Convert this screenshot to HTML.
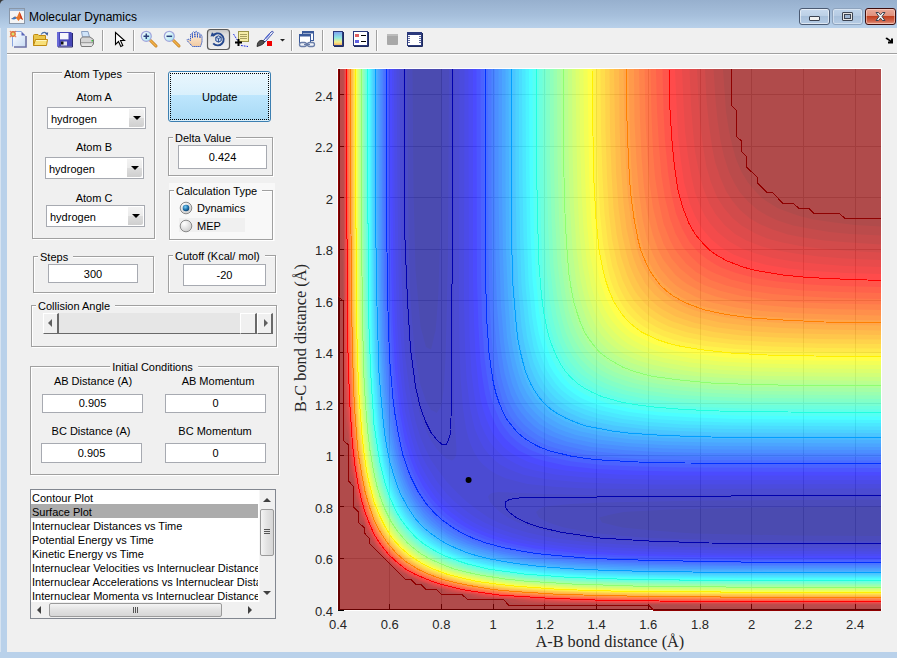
<!DOCTYPE html>
<html><head><meta charset="utf-8">
<style>
html,body{margin:0;padding:0;width:897px;height:658px;overflow:hidden;background:#f0f0f0;}
body{position:relative;font-family:"Liberation Sans",sans-serif;}
.a{position:absolute;}
.t{position:absolute;font:11px/13px "Liberation Sans",sans-serif;color:#000;white-space:nowrap;}
.pn{position:absolute;box-sizing:border-box;border:1px solid #a0a0a0;box-shadow:inset 1px 1px #fff,1px 1px #fff;}
.pt{position:absolute;font:11px/13px "Liberation Sans",sans-serif;color:#000;white-space:nowrap;background:#f0f0f0;padding:0 5px 0 2px;}
.ed{position:absolute;box-sizing:border-box;border:1px solid #a7aab1;background:#fff;font:11px/13px "Liberation Sans",sans-serif;text-align:center;color:#000;}
.pop{position:absolute;box-sizing:border-box;border:1px solid #a7aab1;background:#fff;}
.pop .tx{position:absolute;left:3px;font:11px/13px "Liberation Sans",sans-serif;color:#000;}
.pop .bt{position:absolute;right:1px;top:1px;bottom:1px;width:15px;border-radius:0 2px 2px 0;background:linear-gradient(#f3f3f3 0,#ebebeb 50%,#dddddd 50%,#cfcfcf 100%);}
.pop .bt:after{content:"";position:absolute;left:4px;top:7px;border-left:4px solid transparent;border-right:4px solid transparent;border-top:4px solid #000;}
.tick{position:absolute;font:13px/15px "Liberation Sans",sans-serif;color:#262626;white-space:nowrap;}
.sep{position:absolute;top:30px;width:1px;height:21px;background:#a0a0a0;box-shadow:1px 0 #fff;}
</style></head><body>

<!-- window frame -->
<div class="a" style="left:0;top:0;width:897px;height:28px;background:linear-gradient(#97b0ce,#a6bfdb 55%,#b9d1ea)"></div>
<div class="a" style="left:0;top:28px;width:7px;height:630px;background:#b9d1ea"></div>
<div class="a" style="left:0;top:28px;width:1px;height:630px;background:#d6e3f1"></div>
<div class="a" style="left:0;top:652px;width:897px;height:6px;background:#b9d1ea"></div>
<div class="a" style="left:7px;top:53px;width:890px;height:1px;background:#a0a0a0"></div>
<div class="a" style="left:7px;top:54px;width:890px;height:1px;background:#fff"></div>
<svg class="a" style="left:0;top:0" width="4" height="4" viewBox="0 0 4 4"><path d="M0 0H4Q1 0.5 0 4Z" fill="#3a3a3a"/></svg>
<!-- title icon -->
<svg class="a" style="left:9px;top:8px" width="17" height="17" viewBox="0 0 17 17">
<rect x="0.5" y="0.5" width="15" height="15" fill="#f4f4f4" stroke="#8a97a8"/>
<rect x="1" y="1" width="14" height="2" fill="#9ab5d6"/>
<path d="M2 11 L6 8.5 L8 9 L10.5 3.5 L14 12 L11.5 10.5 L9.5 13 L7.5 10.5 Z" fill="#e8762b"/>
<path d="M2 11 L6 8.5 L7.5 10.5 L5 11.5 Z" fill="#3b7bc4"/>
<path d="M10.5 3.5 L14 12 L11.5 10.5 Z" fill="#c8331a"/>
</svg>
<div class="a" style="left:29px;top:10px;font:12px/14px 'Liberation Sans',sans-serif;color:#000;white-space:nowrap">Molecular Dynamics</div>
<!-- caption buttons -->
<div class="a" style="left:799px;top:8px;width:31px;height:17px;box-sizing:border-box;border:1px solid #4b5a72;border-radius:3px;background:linear-gradient(#c9daee 0,#bcd0e6 45%,#a8c0db 50%,#b4cbe4 100%);box-shadow:inset 0 0 0 1px rgba(255,255,255,.55)"></div>
<div class="a" style="left:809px;top:16px;width:11px;height:5px;box-sizing:border-box;border:1px solid #3a4150;border-radius:1px;background:#f0f0f0"></div>
<div class="a" style="left:832px;top:8px;width:31px;height:17px;box-sizing:border-box;border:1px solid #8ea3bd;border-radius:3px;background:linear-gradient(#c0d4ea 0,#b6cbe3 45%,#a9c1dc 50%,#b6cce4 100%);box-shadow:inset 0 0 0 1px rgba(255,255,255,.4)"></div>
<div class="a" style="left:842px;top:12px;width:11px;height:9px;box-sizing:border-box;border:1px solid #3d4452;border-radius:1px;background:#e4e4e4"></div>
<div class="a" style="left:844px;top:14px;width:7px;height:5px;box-sizing:border-box;border:1px solid #3d4452;background:#9fb6d2"></div>
<div class="a" style="left:865px;top:8px;width:31px;height:17px;box-sizing:border-box;border:1px solid #3d0d0d;border-radius:3px;background:linear-gradient(#eaa999 0,#e0907c 45%,#c3401f 50%,#d0634a 80%,#e49a85 100%);box-shadow:inset 0 0 0 1px rgba(255,230,220,.5)"></div>
<svg class="a" style="left:874px;top:11px" width="13" height="11" viewBox="0 0 13 11">
<path d="M2 1.5 L4.5 1.5 L6.5 3.8 L8.5 1.5 L11 1.5 L8 5.5 L11 9.5 L8.5 9.5 L6.5 7.2 L4.5 9.5 L2 9.5 L5 5.5 Z" fill="#f4f4f4" stroke="#3b4250" stroke-width="1" stroke-linejoin="round"/>
</svg>

<!-- toolbar -->
<svg class="a" style="left:0;top:28px" width="440" height="25" viewBox="0 28 440 25">
<defs>
<linearGradient id="gPage" x1="0" y1="0" x2="1" y2="1"><stop offset="0" stop-color="#ffffff"/><stop offset="1" stop-color="#c9dcf4"/></linearGradient>
<linearGradient id="gFold" x1="0" y1="0" x2="0" y2="1"><stop offset="0" stop-color="#ffe27a"/><stop offset="1" stop-color="#e2b437"/></linearGradient>
<linearGradient id="gLens" x1="0" y1="0" x2="1" y2="1"><stop offset="0" stop-color="#ffffff"/><stop offset="1" stop-color="#9fe3f0"/></linearGradient>
<linearGradient id="gCbar" x1="0" y1="0" x2="0" y2="1"><stop offset="0" stop-color="#7d9ef0"/><stop offset=".45" stop-color="#8fe8e0"/><stop offset=".75" stop-color="#f2ee8a"/><stop offset="1" stop-color="#f4a860"/></linearGradient>
<linearGradient id="gBtn" x1="0" y1="0" x2="0" y2="1"><stop offset="0" stop-color="#c4c4c4"/><stop offset=".25" stop-color="#dedede"/><stop offset="1" stop-color="#f0f0f0"/></linearGradient>
<linearGradient id="gHand" x1="0" y1="0" x2="0" y2="1"><stop offset="0" stop-color="#fff4e6"/><stop offset="1" stop-color="#f0c9a0"/></linearGradient>
</defs>
<!-- new -->
<path d="M13 32 H21.5 L25 35.5 V46 H13 Z" fill="url(#gPage)"/>
<path d="M12.5 46.5 V31.5 H21.5" fill="none" stroke="#8aa6e0" stroke-width="1"/>
<path d="M14 47 H26 V36" fill="none" stroke="#6a70a6" stroke-width="1.6"/>
<path d="M21.5 31.5 L25.5 35.5 H21.5 Z" fill="#5a66b8"/>
<circle cx="13" cy="34" r="2.2" fill="#d8e070" stroke="#e6713c" stroke-width="1.4"/>
<path d="M10.3 31.3h.01M15.7 31.3h.01M10.3 36.7h.01M15.7 36.7h.01" stroke="#e6713c" stroke-width="1.3" stroke-linecap="round"/>
<!-- open -->
<path d="M33.5 45.5 V35.5 Q33.5 34.5 34.5 34.5 H38 L39 35.5 H45.5 V45.5 Z" fill="#e9c54a" stroke="#c08a10" stroke-width="1"/>
<path d="M35.5 39.5 H47.5 L46.5 45.5 H33.5 Z" fill="#f8e07a" stroke="#c08a10" stroke-width="1"/>
<path d="M36 40.5 H46.5" stroke="#fff6c0" stroke-width="1"/>
<path d="M41 34.5 Q43.5 31.2 46.5 33.2" fill="none" stroke="#4a70a8" stroke-width="1.1"/>
<path d="M45 33.5 L48.2 32.3 L47.6 35.8 Z" fill="#3a5a98"/>
<!-- save -->
<path d="M57 32 H71 L72 33 V46.5 H57 Z" fill="#4848b8"/>
<path d="M57 32 H59 V46.5 H57 Z" fill="#6a6ad8"/>
<rect x="60" y="33" width="8.5" height="6" fill="#f6f6fc"/>
<rect x="60" y="39" width="8.5" height="1" fill="#8a8ad0"/>
<rect x="61" y="41.5" width="6" height="4" fill="#e8e8f0"/>
<rect x="61" y="41.5" width="2.5" height="3" fill="#101010"/>
<path d="M72.5 33 V47 H58" fill="none" stroke="#2a2a70" stroke-width="1"/>
<!-- print -->
<path d="M81.5 31.5 H88 L89.5 37 H82.5 Z" fill="#cfe4fa" stroke="#8aa0c0" stroke-width="1"/>
<path d="M80.5 39 L82.5 37 H90 L93.5 39.5 V44 L91.5 46.5 H81.5 L80.5 44 Z" fill="#d4d4d4" stroke="#7a7a7a" stroke-width="1"/>
<path d="M81 42.5 H93" stroke="#a0a0a0" stroke-width="1"/>
<path d="M82 45 H92" stroke="#f4f4f4" stroke-width="1"/>
<rect x="91.5" y="40" width="1.5" height="1.5" fill="#3cbc3c"/>
<!-- separators -->
<rect x="102" y="30" width="1" height="21" fill="#a0a0a0"/><rect x="103" y="30" width="1" height="21" fill="#fff"/>
<rect x="133" y="30" width="1" height="21" fill="#a0a0a0"/><rect x="134" y="30" width="1" height="21" fill="#fff"/>
<rect x="291" y="30" width="1" height="21" fill="#a0a0a0"/><rect x="292" y="30" width="1" height="21" fill="#fff"/>
<rect x="322" y="30" width="1" height="21" fill="#a0a0a0"/><rect x="323" y="30" width="1" height="21" fill="#fff"/>
<rect x="376" y="30" width="1" height="21" fill="#a0a0a0"/><rect x="377" y="30" width="1" height="21" fill="#fff"/>
<!-- pointer -->
<path d="M115.5 32.5 V44.5 L118.5 41.5 L120.8 46.5 L122.8 45.5 L120.5 40.5 L124.5 40.5 Z" fill="#fff" stroke="#000" stroke-width="1.1" stroke-linejoin="miter"/>
<!-- zoom in -->
<path d="M150.5 40.5 L156 46" stroke="#c27c1c" stroke-width="3" stroke-linecap="round"/>
<path d="M150.5 40.5 L156 46" stroke="#f2b24a" stroke-width="1.6" stroke-linecap="round"/>
<circle cx="146.3" cy="36.3" r="5" fill="url(#gLens)" stroke="#a2a6dc" stroke-width="1.2"/>
<path d="M143.5 36.3 H149.1 M146.3 33.5 V39.1" stroke="#2c3e7a" stroke-width="1.5"/>
<!-- zoom out -->
<path d="M173.5 40.5 L179 46" stroke="#c27c1c" stroke-width="3" stroke-linecap="round"/>
<path d="M173.5 40.5 L179 46" stroke="#f2b24a" stroke-width="1.6" stroke-linecap="round"/>
<circle cx="169.3" cy="36.3" r="5" fill="url(#gLens)" stroke="#a2a6dc" stroke-width="1.2"/>
<path d="M166.5 36.3 H172.1" stroke="#2c3e7a" stroke-width="1.5"/>
<!-- pan -->
<path d="M192.5 46.5 L187.5 41 Q186.5 39.5 188 39 L190.5 40.5 V34.5 Q191.2 33.3 192.2 34.2 L192.5 38 V32.5 Q193.5 31 194.5 32.3 L195 37.5 V32 Q196.2 30.7 197.2 32 L197.5 37.5 V33.5 Q198.7 32.3 199.8 33.5 L200 38 V35.5 Q201 34.5 202 35.6 V42 L200.5 46.5 Z" fill="url(#gHand)" stroke="#2f58c8" stroke-width="1" stroke-dasharray="1.4 .6"/>
<!-- rotate (pressed) -->
<rect x="207.5" y="29.5" width="22" height="20" rx="3" fill="url(#gBtn)" stroke="#5a5a5a" stroke-width="1.2"/>
<path d="M212.6 36.2 A6 6 0 1 1 213.2 43.4" fill="none" stroke="#25488e" stroke-width="1.9"/>
<path d="M210.5 36.5 L212 32.2 L215.5 35.5 Z" fill="#25488e"/>
<path d="M215.8 37.2 L218.5 35.8 L221.2 37.2 V40.8 L218.5 42.2 L215.8 40.8 Z" fill="#c4d6f0" stroke="#25488e" stroke-width="1"/>
<path d="M215.8 37.2 L218.5 38.6 L221.2 37.2 M218.5 38.6 V42" fill="none" stroke="#25488e" stroke-width=".9"/>
<!-- data cursor -->
<rect x="238.5" y="31.5" width="10" height="10" fill="#f6eea8" stroke="#9a9448"/>
<path d="M240 34.5h7M240 36.5h7M240 38.5h7" stroke="#a8a060" stroke-width="1"/>
<path d="M233.5 34 L237.5 40.5 M241 45.5 L248 46.5" stroke="#1c2ce0" stroke-width="1" stroke-dasharray="1.8 1"/>
<path d="M235 42.5 H242 M238.5 39 V46" stroke="#000" stroke-width="2"/>
<!-- brush -->
<path d="M263.5 40.5 L271 32 Q272.5 30.8 273.2 31.8 Q273.5 32.6 272.5 33.5 L265 42 Z" fill="#f0f2fa" stroke="#3a4eb0" stroke-width="1"/>
<path d="M265.5 38.5 L269.5 34" stroke="#5a6ed0" stroke-width="1.2"/>
<path d="M257 46.5 Q257 42.5 259.5 40.8 Q262 39.5 264.5 41.5 Q264.5 44.5 257 46.5 Z" fill="#505050" stroke="#202020" stroke-width=".8"/>
<rect x="267" y="41" width="5" height="5" fill="#f00000"/>
<path d="M280 39 H285 L282.5 41.5 Z" fill="#222"/>
<!-- link -->
<rect x="302.5" y="31.5" width="11" height="9" fill="#f8fbff" stroke="#3a5a9a"/>
<rect x="303" y="32" width="10" height="1.5" fill="#3a5a9a"/>
<rect x="299.5" y="34.5" width="11" height="9" fill="#ffffff" stroke="#3a5a9a"/>
<rect x="300" y="35" width="10" height="1.5" fill="#3a5a9a"/>
<rect x="299.5" y="42.5" width="7" height="4" rx="2" fill="#eef2f8" stroke="#6a7ea8" stroke-width="1.3"/>
<rect x="307.5" y="42.5" width="7" height="4" rx="2" fill="#eef2f8" stroke="#6a7ea8" stroke-width="1.3"/>
<path d="M304 44.5 H310" stroke="#6a7ea8" stroke-width="1.3"/>
<!-- colorbar -->
<rect x="333.5" y="31.5" width="9" height="14" fill="url(#gCbar)" stroke="#2c3a7c"/>
<path d="M343.5 32 V46.5 H334" fill="none" stroke="#1e2a5c" stroke-width="1"/>
<!-- legend -->
<rect x="353.5" y="31.5" width="14" height="14" fill="#fff" stroke="#2c3a7c"/>
<path d="M368.5 32 V46.5 H354" fill="none" stroke="#1e2a5c"/>
<rect x="355" y="34" width="4" height="3" fill="#e06060"/>
<rect x="355" y="40" width="4" height="3" fill="#6060e0"/>
<path d="M361 35.5 H366 M361 41.5 H366" stroke="#000" stroke-width="1"/>
<!-- hide plot tools -->
<rect x="387" y="34" width="11" height="11" rx="1" fill="#a8a8a8"/>
<rect x="387" y="34" width="11" height="2" fill="#bcbcbc"/>
<!-- show plot tools -->
<rect x="407.5" y="32.5" width="14" height="13" fill="#fff" stroke="#2c3a7c"/>
<rect x="408" y="33" width="13" height="2" fill="#2c3a7c"/>
<path d="M422.5 33 V46.5 H408" fill="none" stroke="#1e2a5c"/>
<path d="M409 36 V44 M420 36 V44" stroke="#2c3a7c" stroke-width="1.5" stroke-dasharray="1 1"/>
</svg>
<!-- right arrow glyph -->
<svg class="a" style="left:885px;top:37px" width="9" height="7" viewBox="0 0 9 7"><path d="M0.5 1 L2 0.5 L6 3.5 V1.5 L8 1.5 V6.5 H3 V4.5 H5 L1 2 Z" fill="#000"/></svg>

<!-- Atom Types panel -->
<div class="pn" style="left:32px;top:72px;width:123px;height:167px"></div>
<div class="pt" style="left:62px;top:68px">Atom Types</div>
<div class="t" style="left:94px;top:91px;transform:translateX(-50%)">Atom A</div>
<div class="pop" style="left:47px;top:107px;width:99px;height:22px"><div class="tx" style="top:5px">hydrogen</div><div class="bt"></div></div>
<div class="t" style="left:94px;top:141px;transform:translateX(-50%)">Atom B</div>
<div class="pop" style="left:45px;top:157px;width:99px;height:22px"><div class="tx" style="top:5px">hydrogen</div><div class="bt"></div></div>
<div class="t" style="left:94px;top:192px;transform:translateX(-50%)">Atom C</div>
<div class="pop" style="left:46px;top:205px;width:99px;height:22px"><div class="tx" style="top:5px">hydrogen</div><div class="bt"></div></div>
<!-- Update button -->
<div class="a" style="left:168px;top:71px;width:103px;height:51px;box-sizing:border-box;border:1px solid #3c7fb1;border-radius:3px;background:linear-gradient(#eaf6fd 0,#d9f0fc 47%,#bee6fd 47%,#a7d9f5 100%);box-shadow:inset 0 0 0 1px rgba(255,255,255,.6)"></div>
<div class="a" style="left:170px;top:73px;width:99px;height:47px;box-sizing:border-box;border:1px dotted #000"></div>
<div class="t" style="left:202px;top:91px">Update</div>
<!-- Delta Value -->
<div class="pn" style="left:168px;top:137px;width:105px;height:39px"></div>
<div class="pt" style="left:173px;top:132px">Delta Value</div>
<div class="ed" style="left:178px;top:145px;width:89px;height:24px;line-height:22px">0.424</div>
<!-- Calculation Type -->
<div class="a" style="left:169px;top:183px;width:106px;height:58px;background:#f8f8f8"></div>
<div class="pn" style="left:169px;top:190px;width:104px;height:50px"></div>
<div class="pt" style="left:174px;top:185px;background:#f8f8f8">Calculation Type</div>
<div class="a" style="left:179px;top:218px;width:66px;height:14px;background:#f0f0f0"></div>
<svg class="a" style="left:179px;top:201px" width="14" height="32" viewBox="0 0 14 32">
<defs>
<radialGradient id="rOff" cx=".35" cy=".3" r=".8"><stop offset="0" stop-color="#ffffff"/><stop offset="1" stop-color="#c8c8c8"/></radialGradient>
<radialGradient id="rDot" cx=".4" cy=".35" r=".7"><stop offset="0" stop-color="#7fd0f8"/><stop offset=".6" stop-color="#1c6ea8"/><stop offset="1" stop-color="#0b3b66"/></radialGradient>
</defs>
<circle cx="7" cy="7" r="5.8" fill="url(#rOff)" stroke="#8a8a8a" stroke-width="1"/>
<circle cx="7" cy="7" r="3.3" fill="url(#rDot)"/>
<circle cx="7" cy="25" r="5.8" fill="url(#rOff)" stroke="#8a8a8a" stroke-width="1"/>
</svg>
<div class="t" style="left:197px;top:202px">Dynamics</div>
<div class="t" style="left:197px;top:220px">MEP</div>
<!-- Steps -->
<div class="pn" style="left:33px;top:256px;width:121px;height:37px"></div>
<div class="pt" style="left:38px;top:251px">Steps</div>
<div class="ed" style="left:48px;top:264px;width:90px;height:19px;line-height:19px">300</div>
<!-- Cutoff -->
<div class="pn" style="left:168px;top:255px;width:108px;height:38px"></div>
<div class="pt" style="left:173px;top:250px">Cutoff (Kcal/ mol)</div>
<div class="ed" style="left:183px;top:264px;width:83px;height:22px;line-height:20px">-20</div>
<!-- Collision Angle -->
<div class="pn" style="left:31px;top:305px;width:246px;height:42px"></div>
<div class="pt" style="left:36px;top:300px">Collision Angle</div>
<div class="a" style="left:43px;top:313px;width:229px;height:21px;background:#e6e6e6;border-bottom:1px solid #696969;box-sizing:border-box"></div>
<div class="a" style="left:43px;top:313px;width:16px;height:21px;box-sizing:border-box;background:#f0f0f0;border-top:1px solid #fff;border-left:1px solid #fff;border-right:2px solid #696969;border-bottom:1px solid #696969"></div>
<div class="a" style="left:240px;top:313px;width:17px;height:21px;box-sizing:border-box;background:#f0f0f0;border-top:1px solid #fff;border-left:1px solid #fff;border-right:2px solid #696969;border-bottom:1px solid #696969"></div>
<div class="a" style="left:257px;top:313px;width:16px;height:21px;box-sizing:border-box;background:#f0f0f0;border-top:1px solid #fff;border-left:1px solid #fff;border-right:2px solid #696969;border-bottom:1px solid #696969"></div>
<div class="a" style="left:48px;top:319px;width:0;height:0;border-top:4px solid transparent;border-bottom:4px solid transparent;border-right:4px solid #606060"></div>
<div class="a" style="left:264px;top:319px;width:0;height:0;border-top:4px solid transparent;border-bottom:4px solid transparent;border-left:4px solid #606060"></div>
<!-- Initial Conditions -->
<div class="pn" style="left:30px;top:366px;width:249px;height:109px"></div>
<div class="pt" style="left:154px;top:361px;transform:translateX(-50%)">Initial Conditions</div>
<div class="t" style="left:93px;top:375px;transform:translateX(-50%)">AB Distance (A)</div>
<div class="ed" style="left:42px;top:394px;width:101px;height:19px;line-height:17px">0.905</div>
<div class="t" style="left:91px;top:425px;transform:translateX(-50%)">BC Distance (A)</div>
<div class="ed" style="left:41px;top:443px;width:101px;height:20px;line-height:18px">0.905</div>
<div class="t" style="left:218px;top:375px;transform:translateX(-50%)">AB Momentum</div>
<div class="ed" style="left:165px;top:394px;width:101px;height:19px;line-height:17px">0</div>
<div class="t" style="left:215px;top:425px;transform:translateX(-50%)">BC Momentum</div>
<div class="ed" style="left:165px;top:443px;width:101px;height:20px;line-height:18px">0</div>
<!-- Listbox -->
<div class="a" style="left:30px;top:489px;width:246px;height:130px;box-sizing:border-box;border:1px solid #828790;background:#fff;overflow:hidden">
 <div class="a" style="left:0;top:14px;width:227px;height:14px;background:#acacac"></div>
 <div class="a" style="left:1px;top:1px;width:226px;height:112px;overflow:hidden;font:11px/14px 'Liberation Sans',sans-serif;white-space:nowrap;color:#000">
  Contour Plot<br>Surface Plot<br>Internuclear Distances vs Time<br>Potential Energy vs Time<br>Kinetic Energy vs Time<br>Internuclear Velocities vs Internuclear Distance<br>Internuclear Accelerations vs Internuclear Distance<br>Internuclear Momenta vs Internuclear Distance
 </div>
 <!-- v scrollbar -->
 <div class="a" style="left:228px;top:0;width:16px;height:112px;background:#f0f0f0;border-left:1px solid #f7f7f7"></div>
 <div class="a" style="left:232px;top:8px;width:0;height:0;border-left:4px solid transparent;border-right:4px solid transparent;border-bottom:4px solid #404040"></div>
 <div class="a" style="left:229px;top:19px;width:14px;height:47px;box-sizing:border-box;border:1px solid #9a9a9a;border-radius:2px;background:linear-gradient(90deg,#f4f4f4,#e2e2e2 50%,#d6d6d6)"></div>
 <div class="a" style="left:233px;top:39px;width:6px;height:5px;border-top:1px solid #555;border-bottom:1px solid #555;box-sizing:border-box"></div>
 <div class="a" style="left:233px;top:41px;width:6px;height:1px;background:#555"></div>
 <div class="a" style="left:232px;top:101px;width:0;height:0;border-left:4px solid transparent;border-right:4px solid transparent;border-top:4px solid #404040"></div>
 <!-- h scrollbar -->
 <div class="a" style="left:0;top:112px;width:244px;height:16px;background:#f0f0f0"></div>
 <div class="a" style="left:6px;top:116px;width:0;height:0;border-top:4px solid transparent;border-bottom:4px solid transparent;border-right:4px solid #404040"></div>
 <div class="a" style="left:18px;top:113px;width:173px;height:14px;box-sizing:border-box;border:1px solid #9a9a9a;border-radius:2px;background:linear-gradient(#f4f4f4,#e2e2e2 50%,#d6d6d6)"></div>
 <div class="a" style="left:102px;top:117px;width:5px;height:6px;border-left:1px solid #555;border-right:1px solid #555;box-sizing:border-box"></div>
 <div class="a" style="left:104px;top:117px;width:1px;height:6px;background:#555"></div>
 <div class="a" style="left:217px;top:116px;width:0;height:0;border-top:4px solid transparent;border-bottom:4px solid transparent;border-left:4px solid #404040"></div>
</div>

<svg width="897" height="658" viewBox="0 0 1794 1316" style="position:absolute;left:0;top:0">
<rect x="674" y="136" width="1090" height="1086" fill="#fff"/>
<g stroke="#d0d0d0" stroke-width="2" shape-rendering="crispEdges">
<path d="M779 138V1220"/>
<path d="M676 1117H1762"/>
<path d="M883 138V1220"/>
<path d="M676 1013H1762"/>
<path d="M987 138V1220"/>
<path d="M676 911H1762"/>
<path d="M1089 138V1220"/>
<path d="M676 807H1762"/>
<path d="M1193 138V1220"/>
<path d="M676 705H1762"/>
<path d="M1297 138V1220"/>
<path d="M676 601H1762"/>
<path d="M1401 138V1220"/>
<path d="M676 499H1762"/>
<path d="M1503 138V1220"/>
<path d="M676 395H1762"/>
<path d="M1607 138V1220"/>
<path d="M676 293H1762"/>
<path d="M1711 138V1220"/>
<path d="M676 189H1762"/>
</g>
<path stroke="#000" stroke-width="2" fill="none" shape-rendering="crispEdges" d="M678 138V1220M677 138V1220M676 1219H1762M677 1208V1220M676 1221H688M779 1208V1220M676 1117H688M883 1208V1220M676 1013H688M987 1208V1220M676 911H688M1089 1208V1220M676 807H688M1193 1208V1220M676 705H688M1297 1208V1220M676 601H688M1401 1208V1220M676 499H688M1503 1208V1220M676 395H688M1607 1208V1220M676 293H688M1711 1208V1220M676 189H688"/>
<g opacity="0.7">
<rect x="676" y="138" width="1086" height="1082" fill="#800000"/>
<path fill="#8f0000" d="M676 1220l1086 0 0 -1082 -1086 0 0 1082z"/>
<path fill="#9f0000" d="M1497 1215l265 1 0 -763 -52 -3 -41 -5 -41 -6 -26 -6 -26 -9 -21 -8 -21 -13 -10 -7 -11 -11 -17 -20 -13 -21 -11 -26 -7 -25 -7 -31 -6 -39 -6 -85 -766 0 1 258 2 82 3 50 1 270 2 61 2 16 6 7 2 70 2 8 3 5 3 2 3 39 2 5 5 2 3 27 1 2 7 5 2 16 2 5 2 3 4 2 3 11 3 5 4 3 4 9 2 2 5 2 2 7 3 3 5 1 3 7 2 2 7 2 1 6 3 2 6 3 2 5 2 2 9 3 4 5 5 3 11 2 2 5 3 2 5 1 15 2 5 7 3 1 27 3 2 5 5 2 39 3 5 5 7 3 18 1 55 1 5 5 5 2 29 2 316 2 48 3 79 2z"/>
<path fill="#af0000" d="M1116 1207l646 3 0 -739 -62 -3 -41 -4 -42 -7 -31 -6 -31 -10 -21 -10 -20 -12 -18 -16 -16 -18 -12 -20 -10 -21 -10 -31 -7 -31 -6 -41 -4 -41 -4 -62 -740 0 1 577 2 113 3 26 4 15 4 75 2 8 4 6 5 40 1 6 4 4 5 27 3 5 3 2 4 18 6 7 5 14 5 4 3 8 4 6 4 3 5 8 8 7 2 4 9 6 3 5 8 6 5 5 12 5 5 5 14 5 6 6 19 4 2 3 5 3 27 5 4 4 8 2 38 4 6 4 10 2 74 4 12 4 18 2 57 2z"/>
<path fill="#bf0000" d="M1312 1207l450 1 0 -719 -62 -4 -52 -4 -41 -6 -31 -6 -31 -10 -26 -11 -19 -11 -20 -17 -15 -18 -13 -20 -12 -28 -10 -31 -6 -30 -6 -42 -5 -51 -3 -62 -722 0 1 551 1 80 2 49 2 21 3 15 5 77 2 11 3 9 5 40 3 7 2 5 7 29 4 6 6 20 4 5 7 15 3 5 6 11 12 15 21 21 16 12 11 6 4 4 16 6 5 4 20 6 8 5 27 6 10 4 42 6 9 3 11 2 78 5 15 3 20 2 73 2 160 1z"/>
<path fill="#cf0000" d="M1529 1207l233 0 0 -702 -62 -3 -52 -4 -41 -5 -42 -8 -31 -8 -25 -11 -26 -15 -18 -15 -17 -20 -13 -20 -13 -31 -9 -31 -7 -41 -5 -42 -4 -51 -3 -62 -705 0 1 536 2 90 2 50 3 23 6 87 11 64 3 10 7 29 11 28 11 21 9 15 9 12 15 17 24 20 18 11 20 10 29 11 29 7 10 3 45 7 17 4 116 9 47 2 395 3z"/>
<path fill="#df0000" d="M1242 1205l520 1 0 -686 -72 -3 -52 -4 -41 -5 -42 -7 -31 -8 -31 -12 -23 -13 -21 -18 -18 -22 -13 -22 -12 -31 -8 -31 -8 -41 -4 -41 -4 -52 -3 -72 -689 0 1 505 2 93 2 56 9 121 10 67 12 44 9 27 11 22 10 17 10 14 13 14 16 14 12 8 19 12 19 9 30 10 39 10 72 12 132 9 124 3z"/>
<path fill="#ef0000" d="M1397 1205l365 0 0 -671 -72 -2 -52 -4 -52 -5 -41 -7 -31 -8 -31 -11 -26 -15 -21 -17 -16 -18 -10 -15 -8 -16 -12 -31 -7 -31 -7 -41 -6 -51 -3 -52 -3 -72 -673 0 0 319 2 217 2 87 5 88 5 64 11 70 10 39 10 25 11 24 10 18 14 18 19 18 18 14 15 9 24 11 28 11 44 11 70 11 132 9 88 2 188 2z"/>
<path fill="#ff0000" d="M1220 1202l211 2 331 0 0 -656 -72 -2 -62 -4 -52 -5 -42 -7 -41 -11 -26 -10 -26 -15 -19 -16 -18 -21 -14 -25 -11 -26 -11 -41 -6 -42 -6 -51 -3 -62 -3 -72 -658 0 2 515 1 85 5 90 6 78 10 69 13 49 8 23 10 21 11 18 11 15 14 16 15 13 12 9 19 10 20 10 31 11 44 10 73 11 103 7 120 4z"/>
<path fill="#ff1000" d="M1328 1202l434 1 0 -642 -83 -2 -62 -4 -52 -5 -41 -6 -41 -11 -31 -12 -21 -12 -14 -10 -9 -9 -18 -22 -13 -23 -12 -29 -10 -41 -7 -41 -5 -52 -3 -62 -3 -82 -644 0 2 505 2 103 4 93 6 64 10 71 10 40 7 21 8 20 11 21 14 20 12 15 18 16 14 11 18 10 23 10 29 10 33 9 31 6 41 5 83 7 116 5 143 2z"/>
<path fill="#ff2000" d="M1638 1202l124 0 0 -628 -83 -2 -62 -3 -62 -6 -41 -6 -42 -11 -30 -11 -11 -6 -16 -10 -19 -15 -17 -20 -15 -27 -12 -30 -10 -42 -6 -41 -6 -62 -3 -62 -2 -82 -631 0 1 330 1 185 3 124 7 103 4 41 7 41 12 52 9 27 11 24 12 21 17 21 22 20 14 11 18 10 23 10 31 10 38 10 31 5 42 5 93 7 124 4 165 2 259 1z"/>
<path fill="#ff3000" d="M1281 1199l481 2 0 -615 -83 -2 -72 -3 -60 -6 -44 -6 -41 -10 -31 -12 -15 -7 -16 -10 -17 -16 -17 -20 -15 -27 -11 -30 -10 -41 -7 -44 -5 -59 -4 -73 -2 -82 -617 0 2 474 2 124 4 92 6 73 9 61 12 52 8 23 13 28 8 14 12 17 19 21 12 10 19 13 20 11 21 8 31 10 52 11 41 6 42 4 103 6 150 3z"/>
<path fill="#ff4000" d="M1431 1199l331 1 0 -602 -93 -2 -72 -4 -52 -4 -52 -7 -41 -10 -31 -11 -18 -10 -11 -6 -20 -17 -17 -21 -7 -10 -9 -18 -12 -31 -9 -41 -8 -52 -4 -51 -3 -72 -2 -93 -605 0 1 330 1 165 3 123 5 103 4 42 6 41 12 58 7 24 8 21 10 20 12 21 17 21 18 16 20 15 19 10 25 10 29 10 52 11 41 6 42 4 93 5 124 4 186 1z"/>
<path fill="#ff5000" d="M1268 1197l184 1 310 1 0 -590 -103 -2 -73 -3 -52 -5 -51 -7 -42 -10 -31 -11 -18 -9 -10 -7 -22 -18 -17 -20 -6 -11 -10 -18 -11 -31 -10 -41 -7 -51 -4 -52 -4 -72 -2 -103 -592 0 2 474 3 124 4 103 7 72 4 33 6 29 5 22 9 29 7 21 10 20 13 21 12 15 16 16 15 12 21 13 21 10 21 8 29 8 53 11 42 5 49 5 95 5 127 3z"/>
<path fill="#ff6000" d="M1398 1197l364 1 0 -578 -103 -2 -73 -3 -62 -5 -52 -7 -41 -10 -31 -11 -26 -14 -11 -8 -12 -10 -18 -22 -8 -11 -9 -18 -11 -31 -10 -41 -7 -52 -5 -62 -3 -72 -2 -103 -580 0 2 474 3 124 4 97 8 88 11 62 9 31 7 21 9 20 11 21 15 20 13 14 20 17 17 11 20 10 26 10 35 10 27 6 31 5 41 5 83 7 124 4 184 2z"/>
<path fill="#ff7000" d="M1256 1194l185 2 321 0 0 -565 -103 -2 -73 -3 -62 -4 -52 -7 -44 -9 -18 -5 -20 -8 -26 -14 -12 -8 -12 -11 -18 -21 -7 -12 -9 -18 -12 -31 -9 -41 -7 -52 -5 -62 -4 -82 -1 -103 -568 0 1 464 3 123 3 93 8 93 11 62 12 46 10 26 10 20 11 18 10 13 21 21 14 10 17 11 21 10 25 10 27 8 31 7 31 5 72 8 93 5 125 3z"/>
<path fill="#ff8000" d="M1372 1194l390 1 0 -554 -103 -2 -83 -3 -62 -4 -52 -7 -44 -9 -18 -5 -21 -8 -18 -9 -12 -8 -21 -18 -11 -12 -8 -11 -14 -26 -8 -20 -5 -18 -9 -44 -7 -52 -4 -62 -3 -82 -2 -103 -556 0 2 484 3 134 4 83 7 77 11 60 10 38 7 21 10 20 11 21 13 18 13 13 18 16 21 13 21 11 21 8 20 6 31 8 62 10 52 5 52 4 113 4 169 2z"/>
<path fill="#ff8f00" d="M1245 1192l186 1 331 1 0 -543 -114 -2 -83 -3 -62 -4 -51 -7 -44 -9 -18 -5 -21 -8 -26 -14 -10 -8 -13 -11 -18 -21 -7 -11 -10 -18 -8 -21 -5 -18 -9 -44 -7 -51 -4 -62 -3 -83 -2 -113 -545 0 2 464 2 134 4 82 7 83 9 61 12 47 9 26 9 20 12 21 11 15 15 16 16 14 21 13 21 11 21 8 20 7 35 8 27 5 37 6 36 3 103 7 114 3z"/>
<path fill="#ff9f00" d="M1349 1192l413 1 0 -532 -114 -2 -83 -3 -72 -5 -52 -6 -45 -10 -17 -5 -20 -8 -18 -9 -11 -7 -21 -17 -18 -21 -15 -28 -8 -21 -5 -16 -10 -46 -6 -51 -5 -72 -3 -83 -1 -113 -535 0 2 484 3 114 5 103 7 72 6 41 7 31 5 21 10 30 11 22 10 18 10 14 18 19 13 11 21 14 21 11 21 8 20 7 42 10 70 11 85 6 103 4 156 3z"/>
<path fill="#ffaf00" d="M1234 1189l187 2 341 1 0 -522 -124 -2 -83 -2 -62 -4 -59 -7 -44 -9 -21 -7 -18 -6 -26 -14 -10 -7 -15 -13 -9 -10 -10 -13 -9 -16 -6 -13 -7 -17 -6 -21 -9 -41 -7 -52 -5 -72 -2 -82 -2 -124 -523 0 1 474 3 113 4 93 4 62 11 74 12 50 8 25 11 23 10 18 11 16 19 21 13 10 14 10 19 11 23 10 31 10 46 11 73 10 92 6 124 4z"/>
<path fill="#ffbf00" d="M1329 1189l433 1 0 -511 -124 -1 -83 -3 -72 -4 -55 -7 -49 -10 -34 -11 -17 -8 -13 -8 -13 -9 -12 -11 -14 -16 -7 -10 -7 -13 -8 -18 -12 -36 -9 -46 -6 -52 -4 -72 -3 -82 -1 -124 -513 0 1 464 3 123 5 103 3 42 5 41 5 34 5 28 5 20 10 31 11 24 9 17 11 17 13 14 18 18 20 13 18 11 24 10 32 10 20 5 28 5 34 6 42 4 41 3 114 5 146 3z"/>
<path fill="#ffcf00" d="M1703 1189l59 0 0 -501 -124 -1 -93 -3 -73 -4 -51 -6 -49 -10 -34 -11 -21 -10 -10 -6 -13 -9 -13 -12 -13 -14 -7 -11 -6 -10 -10 -21 -11 -33 -10 -49 -6 -51 -4 -73 -3 -92 -1 -124 -503 0 1 309 1 186 4 134 5 92 10 77 7 37 8 31 12 31 9 20 15 24 15 17 16 15 21 15 21 12 25 10 34 10 34 8 31 5 41 5 33 3 60 3 125 4 175 2 293 1z"/>
<path fill="#ffdf00" d="M1346 1187l416 1 0 -491 -124 -1 -93 -3 -73 -4 -54 -6 -49 -9 -39 -12 -19 -9 -14 -8 -11 -7 -13 -12 -10 -11 -10 -13 -8 -14 -8 -17 -7 -21 -6 -19 -8 -43 -7 -61 -4 -73 -3 -92 -1 -124 -493 0 2 464 3 123 4 103 9 83 4 31 7 31 11 41 11 26 10 20 11 16 17 20 13 13 21 15 21 11 21 9 20 7 31 9 31 6 31 5 83 8 114 5 163 3z"/>
<path fill="#ffef00" d="M1251 1184l190 2 321 0 0 -480 -124 -2 -93 -2 -73 -4 -62 -6 -44 -8 -20 -5 -21 -7 -18 -8 -18 -10 -13 -9 -11 -10 -10 -10 -10 -14 -10 -18 -7 -14 -7 -19 -5 -20 -10 -52 -6 -61 -4 -73 -3 -92 -1 -124 -482 0 1 453 3 124 3 91 8 84 3 26 6 36 4 21 9 31 7 20 9 21 12 20 15 21 10 11 21 17 20 13 20 11 22 8 21 7 21 5 41 8 72 9 83 5 130 4z"/>
<path fill="#ffff00" d="M1367 1184l395 1 0 -471 -134 -1 -94 -3 -72 -3 -62 -7 -47 -8 -23 -7 -15 -5 -18 -8 -15 -8 -15 -11 -12 -10 -10 -12 -10 -14 -9 -15 -7 -16 -11 -36 -5 -20 -5 -31 -7 -62 -4 -72 -2 -93 -1 -134 -473 0 2 474 3 134 4 82 8 77 10 60 10 38 8 21 9 21 12 20 13 17 13 14 18 16 20 13 21 11 21 8 21 7 31 8 62 10 51 5 52 4 114 4 153 2z"/>
<path fill="#efff10" d="M1261 1181l180 2 321 1 0 -462 -137 -1 -101 -2 -72 -4 -62 -7 -42 -7 -20 -6 -21 -7 -31 -15 -15 -9 -14 -13 -12 -14 -10 -15 -14 -28 -12 -36 -9 -49 -7 -62 -4 -72 -2 -100 -2 -137 -462 0 1 453 3 134 4 83 7 84 10 65 13 47 8 22 10 22 10 17 11 14 16 17 15 13 10 8 21 12 21 9 31 11 36 9 26 5 39 5 33 4 103 6 120 3z"/>
<path fill="#dfff20" d="M1392 1181l370 1 0 -452 -145 -1 -95 -2 -81 -4 -57 -6 -46 -9 -21 -5 -20 -7 -19 -9 -12 -7 -13 -9 -15 -13 -13 -15 -7 -10 -8 -13 -8 -18 -7 -21 -5 -21 -10 -51 -6 -62 -3 -72 -3 -103 -1 -134 -453 0 2 474 2 113 5 103 5 50 4 33 6 37 6 25 5 20 10 28 10 23 10 17 11 15 19 20 12 11 20 14 21 11 21 8 23 8 43 10 70 10 91 7 104 4 178 2z"/>
<path fill="#cfff30" d="M1271 1179l181 1 310 1 0 -443 -145 -1 -103 -2 -73 -4 -62 -6 -51 -9 -21 -6 -21 -7 -18 -9 -13 -7 -13 -10 -12 -11 -12 -13 -7 -10 -9 -16 -9 -20 -11 -36 -9 -52 -6 -62 -4 -72 -3 -103 -1 -144 -444 0 2 464 2 113 5 93 4 62 11 72 12 51 8 23 13 29 7 13 13 18 18 19 14 12 17 11 21 11 21 9 31 10 52 11 72 10 103 6 130 4z"/>
<path fill="#bfff40" d="M1423 1179l339 0 0 -433 -145 -1 -103 -2 -73 -3 -62 -6 -51 -9 -42 -11 -20 -9 -15 -8 -16 -11 -11 -10 -10 -11 -11 -14 -10 -18 -6 -13 -6 -18 -6 -21 -10 -51 -6 -62 -4 -80 -2 -106 -2 -144 -434 0 0 309 2 165 3 124 5 103 10 82 11 56 9 27 8 20 10 21 12 20 17 21 17 15 20 15 21 11 25 11 27 8 52 12 41 6 41 4 83 5 124 4 168 2z"/>
<path fill="#afff50" d="M1310 1176l452 2 0 -424 -228 -2 -72 -3 -62 -4 -52 -7 -41 -8 -31 -9 -13 -6 -18 -9 -17 -12 -12 -10 -13 -14 -11 -17 -10 -20 -8 -21 -6 -21 -7 -31 -8 -61 -5 -83 -3 -113 -1 -165 -426 0 2 453 3 124 4 103 9 83 4 30 7 31 12 42 10 26 10 19 11 16 10 13 18 18 13 11 21 12 21 11 20 8 34 10 59 11 88 9 98 5 138 3z"/>
<path fill="#9fff60" d="M1593 1176l169 0 0 -414 -238 -3 -72 -3 -62 -4 -52 -6 -41 -9 -34 -11 -28 -14 -18 -12 -14 -13 -10 -13 -13 -20 -9 -21 -7 -21 -6 -21 -6 -31 -7 -61 -5 -83 -3 -113 -1 -165 -416 0 0 309 2 175 3 124 6 93 8 72 7 41 8 31 7 21 13 31 12 20 14 20 11 11 20 18 21 13 21 10 26 11 36 10 62 11 93 9 103 4 155 3 245 1z"/>
<path fill="#8fff70" d="M1365 1174l397 1 0 -406 -248 -2 -73 -3 -62 -5 -51 -6 -42 -9 -31 -10 -28 -15 -16 -11 -15 -14 -13 -16 -9 -14 -10 -21 -7 -21 -6 -20 -6 -31 -8 -62 -4 -82 -3 -114 -1 -175 -408 0 2 464 3 134 5 82 7 75 10 60 11 39 8 22 9 21 12 20 12 16 14 15 17 15 21 13 21 11 20 8 21 7 31 8 62 11 52 5 51 3 104 4 151 3z"/>
<path fill="#80ff80" d="M1279 1171l183 2 300 0 0 -397 -248 -2 -83 -3 -61 -4 -53 -7 -41 -9 -31 -11 -28 -15 -14 -10 -16 -15 -13 -16 -9 -16 -8 -17 -8 -22 -7 -27 -5 -26 -8 -67 -4 -82 -3 -114 -1 -175 -398 0 2 453 2 124 4 83 7 81 10 65 14 49 7 21 10 22 11 17 10 14 17 19 14 12 21 14 21 10 20 9 31 10 29 7 33 6 33 4 40 4 103 6 117 3z"/>
<path fill="#70ff8f" d="M1457 1171l305 1 0 -388 -248 -2 -83 -3 -62 -5 -52 -6 -41 -8 -31 -10 -16 -6 -15 -8 -15 -11 -15 -13 -12 -13 -10 -15 -10 -20 -8 -21 -7 -23 -6 -31 -4 -29 -5 -41 -4 -82 -3 -114 -1 -185 -389 0 0 309 2 175 3 114 5 92 4 42 6 41 3 23 9 39 15 41 10 21 12 20 16 21 11 10 20 16 21 13 27 12 25 9 52 12 72 10 103 8 125 3 191 2z"/>
<path fill="#60ff9f" d="M1322 1168l440 2 0 -379 -259 -2 -82 -3 -62 -5 -52 -6 -41 -9 -32 -10 -20 -9 -11 -6 -18 -13 -13 -13 -10 -13 -11 -18 -10 -20 -7 -21 -5 -21 -6 -31 -8 -64 -5 -90 -2 -114 -1 -185 -381 0 2 453 3 124 5 103 7 72 5 33 7 29 5 21 9 28 10 24 11 19 10 15 14 17 17 15 21 15 19 11 24 10 29 10 21 5 29 6 33 5 72 7 104 5 139 3z"/>
<path fill="#50ffaf" d="M1753 1168l9 0 0 -370 -269 -2 -83 -3 -59 -4 -54 -7 -42 -9 -31 -11 -13 -6 -18 -10 -15 -11 -16 -16 -11 -14 -10 -18 -10 -23 -6 -21 -5 -21 -6 -31 -7 -61 -4 -93 -3 -114 0 -185 -372 0 0 299 2 175 4 134 6 93 5 51 5 31 9 40 10 32 10 27 11 19 10 16 18 21 23 20 16 11 20 10 27 11 32 10 40 8 72 10 93 6 135 4 176 2 301 0z"/>
<path fill="#40ffbf" d="M1443 1166l319 1 0 -362 -269 -2 -83 -3 -62 -4 -51 -6 -42 -8 -20 -6 -19 -7 -28 -14 -16 -11 -15 -16 -12 -16 -11 -18 -9 -20 -6 -21 -6 -23 -5 -28 -8 -69 -4 -86 -3 -124 -1 -185 -362 0 2 453 2 124 5 93 9 90 11 54 10 36 10 26 11 20 10 17 12 14 19 20 15 11 16 11 21 10 26 10 36 11 31 6 31 5 41 5 83 6 124 4 188 2z"/>
<path fill="#30ffcf" d="M1347 1163l415 2 0 -353 -269 -2 -83 -2 -67 -5 -57 -6 -41 -9 -35 -11 -17 -8 -13 -8 -17 -12 -11 -11 -11 -13 -12 -20 -10 -21 -7 -20 -7 -29 -5 -29 -7 -66 -5 -93 -2 -124 -1 -185 -354 0 2 443 3 124 4 93 8 85 11 59 8 31 7 20 8 21 11 21 14 20 14 16 16 15 15 11 16 10 25 12 24 8 38 11 62 10 93 9 93 4 144 2z"/>
<path fill="#20ffdf" d="M1289 1161l173 1 300 1 0 -344 -279 -2 -83 -3 -62 -4 -52 -5 -49 -10 -34 -11 -15 -7 -16 -9 -16 -12 -13 -13 -12 -15 -10 -18 -11 -24 -7 -22 -5 -21 -5 -31 -7 -62 -4 -93 -3 -123 -1 -196 -345 0 2 443 3 124 4 82 6 79 11 65 7 31 7 21 6 18 11 23 10 17 10 14 19 21 12 10 21 14 21 11 21 9 31 10 31 8 31 5 34 5 38 4 103 6 117 3z"/>
<path fill="#10ffef" d="M1517 1161l245 0 0 -335 -279 -2 -86 -3 -69 -4 -62 -8 -42 -9 -33 -11 -19 -9 -10 -7 -15 -12 -15 -15 -11 -16 -8 -15 -9 -21 -7 -20 -7 -31 -5 -28 -6 -65 -5 -93 -2 -123 0 -196 -337 0 1 309 2 175 3 114 6 92 4 42 6 41 12 52 10 30 9 21 11 21 11 16 13 14 18 17 20 14 18 11 24 10 31 10 32 8 31 6 72 9 114 6 124 3 210 2z"/>
<path fill="#00ffff" d="M1379 1158l383 1 0 -326 -290 -2 -82 -3 -73 -4 -51 -6 -47 -10 -36 -13 -16 -8 -13 -8 -13 -9 -13 -14 -13 -18 -10 -18 -7 -15 -8 -26 -6 -26 -6 -31 -6 -67 -4 -87 -2 -124 -1 -206 -328 0 2 443 3 124 5 103 4 41 5 41 10 52 13 45 11 24 10 19 10 16 17 19 24 21 15 10 20 11 24 10 33 10 23 6 25 5 37 5 46 5 36 3 114 4 155 3z"/>
<path fill="#00efff" d="M1338 1156l424 1 0 -317 -290 -2 -85 -3 -70 -4 -59 -7 -44 -9 -21 -6 -15 -6 -16 -7 -14 -9 -13 -10 -14 -14 -13 -17 -9 -15 -9 -23 -8 -24 -5 -20 -5 -31 -7 -73 -4 -92 -2 -124 -1 -206 -319 0 2 443 3 124 4 92 9 83 12 62 12 41 9 22 10 20 10 16 12 14 19 20 15 11 16 10 21 11 25 10 35 10 54 11 41 5 53 5 102 5 135 3z"/>
<path fill="#00dfff" d="M1306 1153l177 2 279 0 0 -309 -300 -1 -85 -3 -70 -4 -62 -8 -42 -9 -33 -11 -16 -8 -13 -8 -18 -14 -12 -13 -11 -16 -9 -15 -8 -21 -7 -21 -7 -30 -5 -31 -7 -73 -3 -92 -2 -124 -1 -206 -310 0 2 422 2 124 4 93 9 93 11 61 11 42 10 24 10 21 10 17 16 20 15 15 20 16 17 10 22 11 27 10 28 8 31 7 36 6 68 7 82 5 134 3z"/>
<path fill="#00cfff" d="M1657 1153l105 0 0 -300 -310 -2 -86 -2 -69 -5 -52 -6 -49 -10 -34 -12 -17 -8 -14 -9 -14 -12 -14 -15 -11 -16 -10 -18 -9 -23 -6 -21 -9 -51 -7 -72 -4 -93 -2 -124 -1 -216 -301 0 1 299 2 175 3 113 7 103 3 31 8 52 13 51 10 28 10 22 14 23 16 20 22 20 15 11 18 10 22 11 29 10 40 10 65 11 90 7 104 4 165 3 257 1z"/>
<path fill="#00bfff" d="M1492 1150l270 1 0 -291 -310 -2 -86 -2 -69 -4 -60 -7 -44 -9 -21 -6 -17 -7 -14 -6 -15 -10 -16 -12 -13 -14 -10 -14 -11 -21 -9 -21 -6 -23 -7 -28 -4 -31 -7 -72 -3 -93 -2 -124 0 -216 -293 0 1 299 2 175 3 113 6 93 5 41 6 42 11 50 11 30 10 23 10 19 11 15 14 17 17 15 21 15 19 11 23 11 30 9 52 12 72 10 103 7 125 4 195 1z"/>
<path fill="#00afff" d="M1413 1148l349 1 0 -283 -321 -1 -88 -3 -67 -4 -59 -7 -44 -9 -21 -6 -18 -8 -13 -6 -14 -9 -17 -14 -10 -12 -11 -14 -10 -19 -8 -19 -7 -25 -6 -26 -5 -31 -6 -72 -4 -93 -2 -134 0 -216 -284 0 2 433 3 123 6 104 9 82 12 59 15 44 9 21 12 20 16 21 10 12 21 17 18 12 20 10 24 11 34 10 28 6 31 6 42 5 82 7 114 4 158 3z"/>
<path fill="#009fff" d="M1403 1145l359 2 0 -274 -321 -1 -93 -3 -70 -4 -54 -6 -49 -10 -34 -12 -18 -9 -13 -8 -15 -12 -13 -15 -12 -16 -9 -18 -9 -23 -6 -21 -6 -28 -4 -29 -6 -67 -4 -92 -1 -134 -1 -227 -274 0 2 433 3 123 5 93 9 83 10 57 11 35 8 21 12 26 10 15 16 21 16 16 19 15 16 10 21 10 26 11 32 9 20 4 38 7 24 3 83 8 114 5 158 2z"/>
<path fill="#008fff" d="M1394 1143l368 1 0 -264 -331 -2 -93 -2 -70 -4 -54 -7 -29 -5 -20 -5 -34 -12 -15 -8 -16 -10 -15 -14 -13 -13 -10 -16 -8 -15 -8 -21 -7 -23 -5 -29 -5 -30 -6 -73 -4 -92 -1 -134 -1 -227 -265 0 1 278 2 165 3 124 5 82 6 66 6 37 6 31 9 31 10 28 10 22 11 17 11 16 19 20 12 10 20 14 21 11 20 9 21 8 39 10 64 11 93 8 104 4 149 3z"/>
<path fill="#0080ff" d="M1384 1140l378 2 0 -255 -331 -2 -93 -2 -72 -4 -60 -7 -44 -9 -21 -6 -20 -8 -16 -9 -13 -8 -15 -14 -11 -13 -12 -18 -10 -20 -7 -21 -6 -23 -6 -29 -4 -30 -5 -73 -4 -92 -1 -134 0 -227 -256 0 0 278 2 165 3 113 5 93 4 42 4 30 6 38 6 24 5 21 10 29 10 23 11 18 16 23 15 15 18 15 15 11 18 10 23 10 31 11 29 7 31 6 42 6 72 6 106 6 147 2z"/>
<path fill="#0070ff" d="M1376 1138l386 1 0 -245 -341 -2 -93 -2 -73 -4 -59 -7 -44 -9 -21 -7 -16 -6 -15 -8 -15 -10 -13 -12 -13 -14 -11 -16 -10 -20 -7 -21 -6 -20 -6 -31 -5 -31 -5 -72 -3 -93 -2 -134 0 -237 -247 0 2 422 3 124 5 93 4 41 5 41 3 21 9 41 13 41 9 23 11 19 13 20 18 20 12 11 19 14 21 13 20 9 21 8 31 9 52 11 41 5 41 4 114 6 152 4z"/>
<path fill="#0060ff" d="M1408 1135l354 1 0 -236 -341 -1 -93 -2 -73 -4 -62 -6 -44 -9 -18 -5 -21 -8 -15 -8 -16 -9 -13 -12 -14 -15 -11 -16 -9 -18 -8 -20 -6 -24 -6 -28 -4 -31 -6 -72 -3 -93 -2 -134 0 -247 -237 0 1 258 1 164 3 124 5 93 9 82 11 53 10 36 10 25 11 22 10 17 18 23 13 13 21 16 18 12 21 10 27 10 48 13 41 8 21 3 82 7 114 5 153 3z"/>
<path fill="#0050ff" d="M1451 1132l311 1 0 -226 -352 -1 -93 -2 -72 -4 -62 -6 -47 -10 -15 -5 -21 -8 -18 -9 -13 -9 -15 -14 -11 -13 -12 -18 -9 -19 -7 -22 -6 -21 -5 -31 -4 -31 -6 -72 -3 -93 -1 -134 0 -247 -227 0 1 258 1 164 3 124 5 83 6 67 12 67 9 34 10 27 11 24 10 18 15 20 16 17 16 14 15 11 18 10 24 11 27 9 40 11 67 11 103 8 114 4 165 2z"/>
<path fill="#0040ff" d="M1514 1130l248 0 0 -216 -362 -1 -93 -2 -72 -4 -63 -6 -44 -10 -18 -5 -20 -8 -15 -8 -15 -11 -12 -10 -13 -15 -10 -16 -10 -20 -7 -21 -6 -23 -5 -29 -4 -31 -6 -72 -3 -92 -1 -134 0 -258 -217 0 1 278 1 165 4 113 6 93 5 41 6 42 11 50 10 32 9 21 12 22 10 15 12 14 21 21 19 15 21 12 31 14 21 7 20 6 36 8 73 10 108 7 114 4 197 2z"/>
<path fill="#0030ff" d="M1625 1127l137 0 0 -206 -393 -1 -93 -2 -73 -5 -31 -4 -31 -5 -20 -5 -24 -7 -20 -9 -18 -11 -13 -10 -13 -13 -11 -14 -9 -17 -8 -18 -5 -18 -6 -23 -5 -23 -6 -62 -4 -72 -2 -93 -1 -371 -207 0 1 258 1 164 4 124 6 93 9 75 9 49 6 20 7 21 13 31 12 20 15 22 18 20 13 10 30 20 20 11 26 10 35 10 54 11 87 10 110 6 155 3 225 1z"/>
<path fill="#0020ff" d="M1386 1122l376 2 0 -195 -383 -1 -93 -2 -72 -4 -60 -7 -44 -9 -20 -6 -18 -8 -14 -7 -15 -10 -14 -13 -10 -13 -11 -18 -9 -18 -8 -23 -5 -23 -5 -31 -4 -29 -5 -74 -2 -93 -2 -402 -196 0 1 247 2 165 3 124 5 82 7 68 12 66 8 32 11 29 10 22 10 17 11 15 16 19 24 21 15 10 17 10 22 11 29 10 39 10 59 11 89 8 93 4 131 3z"/>
<path fill="#0010ff" d="M1489 1120l273 0 0 -184 -393 -1 -93 -2 -73 -3 -59 -7 -44 -9 -21 -7 -16 -6 -15 -8 -14 -10 -14 -13 -12 -16 -9 -15 -9 -21 -7 -20 -5 -21 -5 -31 -4 -31 -5 -72 -2 -93 -1 -412 -185 0 1 278 2 165 4 103 6 93 5 41 6 41 10 45 11 31 10 24 10 19 11 16 16 20 15 15 19 16 22 13 14 7 28 12 27 9 45 10 72 11 93 6 104 4 182 3z"/>
<path fill="#0000ff" d="M1372 1114l390 3 0 -173 -403 -1 -93 -2 -73 -3 -62 -7 -41 -9 -21 -6 -17 -8 -14 -7 -14 -11 -14 -13 -11 -14 -8 -14 -9 -21 -7 -20 -5 -21 -5 -31 -4 -31 -4 -72 -3 -93 -1 -422 -173 0 0 237 2 155 3 113 5 94 10 91 10 54 11 36 5 13 5 13 15 29 16 23 16 18 15 14 22 17 17 10 23 11 25 10 35 10 54 11 92 10 94 4 117 3z"/>
<path fill="#0000ef" d="M1550 1112l212 0 0 -161 -434 0 -93 -2 -73 -5 -31 -3 -31 -5 -23 -6 -20 -6 -19 -9 -16 -9 -15 -12 -12 -14 -9 -12 -7 -15 -6 -14 -7 -21 -5 -20 -4 -26 -6 -62 -3 -67 -2 -93 0 -412 -162 0 1 268 2 165 4 103 7 103 4 31 7 41 12 47 10 30 10 23 11 18 18 26 13 15 21 18 26 19 18 10 23 10 30 11 37 9 21 4 46 7 26 3 110 8 128 3 181 2z"/>
<path fill="#0000df" d="M1442 1107l320 1 0 -148 -424 0 -93 -2 -73 -3 -62 -6 -44 -9 -18 -5 -19 -9 -14 -8 -13 -9 -13 -13 -10 -13 -9 -16 -8 -18 -6 -21 -5 -23 -4 -28 -4 -31 -4 -72 -1 -93 -1 -443 -149 0 1 247 2 134 3 124 6 97 10 82 11 49 10 33 10 26 11 20 10 17 12 16 18 21 22 19 16 12 17 10 20 10 26 10 34 11 48 10 87 11 124 6 156 4z"/>
<path fill="#0000cf" d="M1466 1101l296 2 0 -135 -455 1 -93 -2 -62 -3 -62 -6 -42 -8 -16 -6 -17 -7 -15 -8 -11 -9 -12 -12 -10 -13 -8 -15 -9 -21 -5 -20 -5 -23 -7 -60 -3 -62 -2 -92 1 -464 -136 0 2 247 2 165 3 103 7 93 3 31 9 51 12 49 10 29 11 22 21 34 20 25 17 17 25 20 16 11 18 10 22 10 29 10 39 11 62 10 103 9 104 4 138 2z"/>
<path fill="#0000bf" d="M1497 1096l265 1 0 -120 -496 1 -94 -1 -59 -3 -58 -6 -20 -5 -23 -6 -18 -8 -15 -9 -13 -11 -9 -10 -8 -13 -7 -15 -5 -15 -5 -19 -6 -39 -5 -62 -2 -62 -1 -82 1 -474 -120 0 1 237 2 124 3 113 5 98 11 84 10 48 10 33 11 25 10 20 11 16 20 27 21 22 20 19 27 20 16 11 20 10 25 10 33 10 49 11 89 10 124 7 180 3z"/>
<path fill="#0000af" d="M1442 1089l320 2 0 -103 -590 2 -87 -2 -88 -4 -13 2 -5 3 -3 4 4 11 9 10 11 10 16 11 20 10 28 10 40 10 66 11 65 5 89 5 118 3zM899 919l5 2 5 -4 3 -6 1 -10 -5 -88 -1 -88 2 -587 -103 0 1 237 2 165 4 93 8 95 10 65 10 40 11 28 10 20 11 16 10 11 10 9 6 2z"/>
<path fill="#00009f" d="M1495 1081l267 2 0 -84 -344 2 -215 4 -62 3 -41 4 -13 2 -8 4 -7 6 6 11 18 10 32 10 54 10 53 6 64 5 91 3 105 2zM869 823l4 3 6 -8 4 -9 5 -37 3 -57 2 -69 3 -137 2 -371 -84 0 3 330 3 113 4 62 7 73 10 54 11 32 10 18 7 3z"/>
<path fill="#00008f" d="M1586 1071l176 1 0 -59 -248 2 -173 4 -94 5 -25 5 -24 6 6 10 41 10 52 5 62 5 31 2 196 4zM858 697l4 2 9 -38 2 -21 4 -59 5 -175 2 -268 -59 0 2 237 4 165 10 113 11 41 6 3z"/>
</g>
<path fill="none" stroke="#0000af" stroke-width="2" shape-rendering="crispEdges" d="M1762 1088l-344 -2 -121 -4 -97 -6 -75 -11 -44 -10 -29 -10 -20 -10 -14 -11 -8 -10 0 -10 7 -4 11 -3 10 -1 21 -1 403 -3 300 -1M906 138l-1 299 -3 402 -1 20 -1 11 -3 10 -4 8 -10 0 -10 -9 -11 -14 -10 -20 -11 -29 -10 -43 -10 -75 -6 -96 -5 -122 -2 -342"/>
<path fill="none" stroke="#0030ff" stroke-width="2" shape-rendering="crispEdges" d="M1762 1125l-279 -1 -176 -3 -125 -4 -92 -8 -31 -4 -49 -9 -38 -10 -27 -10 -23 -11 -18 -11 -21 -15 -16 -15 -15 -17 -16 -24 -15 -30 -8 -22 -7 -20 -7 -31 -9 -51 -4 -31 -7 -82 -4 -125 -2 -175 -1 -278M970 138l0 268 1 134 2 93 5 72 4 31 5 31 5 20 7 21 8 18 7 13 14 18 10 11 16 12 15 9 10 5 21 8 21 5 20 5 31 5 31 3 73 4 93 2 393 1"/>
<path fill="none" stroke="#009fff" stroke-width="2" shape-rendering="crispEdges" d="M1762 1146l-290 -1 -175 -2 -135 -4 -83 -6 -48 -6 -34 -6 -22 -4 -37 -10 -27 -11 -21 -10 -17 -11 -14 -10 -12 -10 -16 -17 -16 -24 -15 -28 -9 -24 -12 -40 -4 -21 -6 -35 -4 -38 -7 -82 -4 -134 -3 -175 0 -299M1022 138l0 216 1 124 3 93 6 72 3 31 6 31 5 20 6 21 9 21 8 14 10 15 11 12 11 10 15 10 15 8 21 9 20 7 21 4 31 6 31 4 73 5 93 3 124 1 217 1"/>
<path fill="none" stroke="#20ffdf" stroke-width="2" shape-rendering="crispEdges" d="M1762 1161l-310 0 -186 -2 -125 -4 -93 -7 -72 -10 -41 -10 -21 -7 -31 -12 -21 -12 -17 -11 -14 -12 -17 -19 -14 -19 -10 -18 -11 -25 -10 -31 -10 -41 -11 -72 -6 -93 -5 -123 -1 -186 -1 -309M1072 138l1 185 2 114 3 93 5 61 4 31 6 31 5 21 7 20 9 21 7 13 10 15 10 11 14 13 15 10 13 7 20 9 21 6 21 6 31 5 31 4 62 5 93 4 114 1 186 1"/>
<path fill="none" stroke="#8fff70" stroke-width="2" shape-rendering="crispEdges" d="M1762 1174l-310 0 -186 -2 -122 -4 -96 -6 -38 -4 -44 -7 -21 -4 -37 -9 -28 -11 -22 -10 -17 -10 -14 -11 -12 -10 -18 -21 -14 -20 -14 -28 -9 -24 -6 -20 -7 -31 -7 -41 -5 -42 -4 -51 -3 -52 -3 -113 -2 -186 -1 -319M1126 138l1 165 2 103 4 82 5 62 5 31 4 21 6 20 7 21 9 21 6 10 15 20 10 11 14 11 15 9 16 9 21 8 20 6 21 5 52 7 62 6 82 3 104 2 155 1"/>
<path fill="none" stroke="#ffef00" stroke-width="2" shape-rendering="crispEdges" d="M1762 1185l-321 -1 -186 -1 -134 -4 -93 -7 -36 -4 -37 -5 -23 -5 -39 -10 -27 -10 -22 -11 -23 -15 -19 -16 -18 -20 -13 -21 -12 -24 -11 -27 -10 -39 -5 -23 -5 -36 -4 -36 -7 -93 -4 -134 -1 -186 -1 -319M1184 138l2 134 2 93 4 72 6 62 8 41 5 20 7 21 9 21 8 13 10 15 10 11 13 12 15 11 14 7 20 9 21 7 21 5 41 7 62 7 72 4 94 2 134 1"/>
<path fill="none" stroke="#ff8000" stroke-width="2" shape-rendering="crispEdges" d="M1762 1195l-321 -1 -186 -2 -133 -3 -94 -6 -42 -4 -41 -7 -31 -6 -31 -8 -27 -10 -21 -10 -25 -16 -17 -15 -18 -21 -14 -21 -13 -25 -9 -26 -9 -31 -6 -31 -7 -41 -3 -31 -4 -52 -3 -51 -3 -124 -2 -185 -1 -330M1253 138l1 103 3 82 4 62 7 52 8 42 5 20 8 20 8 17 8 14 16 21 11 10 13 10 24 14 21 8 20 7 42 9 51 7 62 4 83 4 114 1"/>
<path fill="none" stroke="#ff0000" stroke-width="2" shape-rendering="crispEdges" d="M1762 1203l-341 0 -207 -2 -124 -5 -93 -6 -42 -6 -31 -5 -41 -10 -21 -7 -31 -13 -20 -11 -14 -11 -18 -16 -10 -12 -10 -13 -11 -18 -10 -23 -8 -21 -6 -20 -7 -31 -7 -42 -5 -41 -6 -92 -4 -124 -1 -196 -1 -340M1338 138l2 82 4 62 5 52 6 41 5 21 6 20 12 31 12 21 17 20 11 11 13 10 21 12 31 12 20 6 21 4 41 7 52 5 62 3 83 3"/>
<path fill="none" stroke="#8f0000" stroke-width="2" shape-rendering="crispEdges" d="M1762 1220l-455 0 -10 -10 -280 0 -10 -11 -72 0 -11 -10 -41 0 -10 -10 -21 0 -11 -11 -10 0 -10 -10 -11 0 -31 -31 -41 -41 0 -10 -10 -11 0 -10 -11 -10 0 -21 -10 -10 0 -41 -10 -11 0 -72 -11 -10 0 -278 -10 -11 0 -453M1462 138l0 72 10 10 0 52 11 10 0 21 10 10 0 21 21 20 0 11 10 10 10 10 11 0 20 21 21 0 11 10 20 0 11 11 51 0 11 10 72 0"/>
<circle cx="937.157" cy="959.805" r="6" fill="#000"/>
</svg>
<div class="tick" style="right:564px;top:603.9px">0.4</div>
<div class="tick" style="right:564px;top:552.3px">0.6</div>
<div class="tick" style="right:564px;top:500.8px">0.8</div>
<div class="tick" style="right:564px;top:449.3px">1</div>
<div class="tick" style="right:564px;top:397.8px">1.2</div>
<div class="tick" style="right:564px;top:346.2px">1.4</div>
<div class="tick" style="right:564px;top:294.7px">1.6</div>
<div class="tick" style="right:564px;top:243.2px">1.8</div>
<div class="tick" style="right:564px;top:191.7px">2</div>
<div class="tick" style="right:564px;top:140.1px">2.2</div>
<div class="tick" style="right:564px;top:88.6px">2.4</div>
<div class="tick" style="left:338.0px;top:616.7px;transform:translateX(-50%)">0.4</div>
<div class="tick" style="left:389.7px;top:616.7px;transform:translateX(-50%)">0.6</div>
<div class="tick" style="left:441.4px;top:616.7px;transform:translateX(-50%)">0.8</div>
<div class="tick" style="left:493.1px;top:616.7px;transform:translateX(-50%)">1</div>
<div class="tick" style="left:544.9px;top:616.7px;transform:translateX(-50%)">1.2</div>
<div class="tick" style="left:596.6px;top:616.7px;transform:translateX(-50%)">1.4</div>
<div class="tick" style="left:648.3px;top:616.7px;transform:translateX(-50%)">1.6</div>
<div class="tick" style="left:700.0px;top:616.7px;transform:translateX(-50%)">1.8</div>
<div class="tick" style="left:751.7px;top:616.7px;transform:translateX(-50%)">2</div>
<div class="tick" style="left:803.4px;top:616.7px;transform:translateX(-50%)">2.2</div>
<div class="tick" style="left:855.1px;top:616.7px;transform:translateX(-50%)">2.4</div>
<div class="a" style="left:609.9px;top:632.6px;transform:translateX(-50%);font:16.3px/18px 'Liberation Serif',serif;color:#262626;white-space:nowrap">A-B bond distance (&#197;)</div>
<div class="a" style="left:300.7px;top:338.4px;transform:translate(-50%,-50%) rotate(-90deg);font:16.3px/18px 'Liberation Serif',serif;color:#262626;white-space:nowrap">B-C bond distance (&#197;)</div>
</body></html>
